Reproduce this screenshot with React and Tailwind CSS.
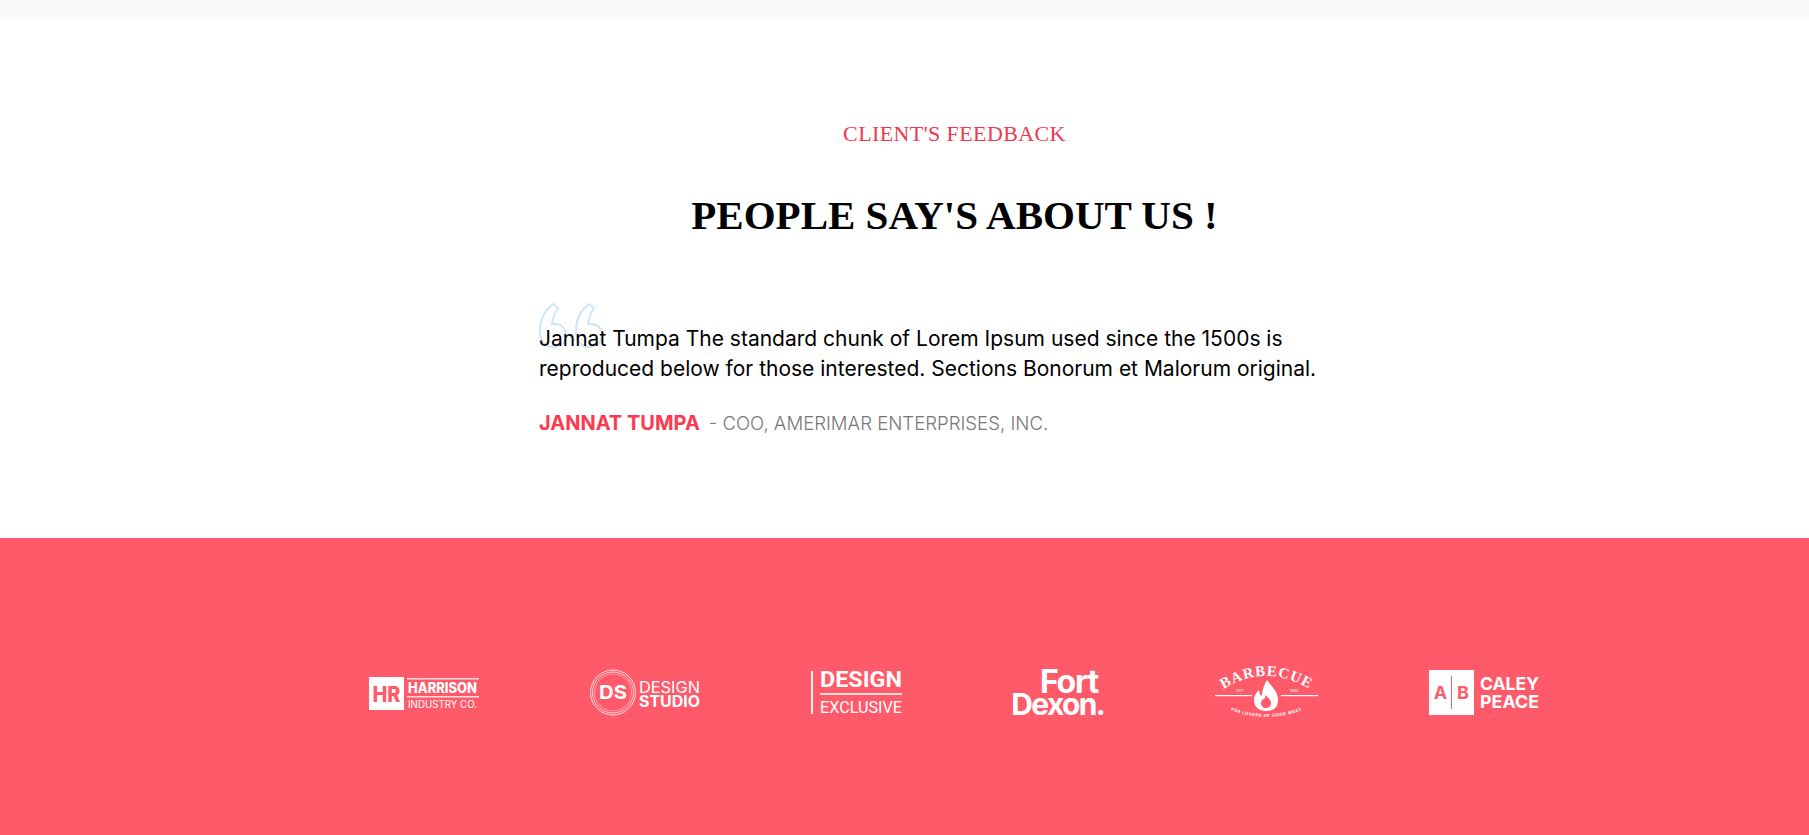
import React from "react";

const serif = "font-['Liberation_Serif',serif]";
const body = "font-['Inter',sans-serif]";
const logoFont = "Inter, sans-serif";

const HarrisonLogo = () => (
  <svg width="110" height="34" viewBox="0 0 110 34" className="block overflow-visible">
    <rect x="0" y="0" width="35" height="33" fill="#fff" />
    <text x="17.5" y="25" textAnchor="middle" fontFamily={logoFont} fontWeight="800" fontSize="22" fill="#ff5a6a" textLength="28" lengthAdjust="spacingAndGlyphs">HR</text>
    <rect x="38" y="1" width="72" height="1.5" fill="#fff" opacity="0.8" />
    <text x="39" y="16" fontFamily={logoFont} fontWeight="800" fontSize="14" fill="#fff" textLength="69" lengthAdjust="spacingAndGlyphs">HARRISON</text>
    <rect x="38" y="19" width="72" height="1.5" fill="#fff" opacity="0.8" />
    <text x="39" y="31" fontFamily={logoFont} fontWeight="400" fontSize="10" fill="#fff" textLength="69" lengthAdjust="spacingAndGlyphs">INDUSTRY CO.</text>
  </svg>
);

const DesignStudioLogo = () => (
  <svg width="110" height="47" viewBox="0 0 110 47" className="block overflow-visible">
    <circle cx="23" cy="23.5" r="22.5" fill="none" stroke="#fff" strokeWidth="1" opacity="0.8" />
    <circle cx="23" cy="23.5" r="20.5" fill="none" stroke="#fff" strokeWidth="1" opacity="0.7" />
    <circle cx="23" cy="23.5" r="18.5" fill="none" stroke="#fff" strokeWidth="0.8" opacity="0.5" />
    <text x="23" y="30" textAnchor="middle" fontFamily={logoFont} fontWeight="700" fontSize="19" fill="#fff" textLength="28" lengthAdjust="spacingAndGlyphs">DS</text>
    <text x="49" y="24" fontFamily={logoFont} fontWeight="400" fontSize="16" fill="#fff" textLength="61" lengthAdjust="spacingAndGlyphs">DESIGN</text>
    <text x="49" y="38" fontFamily={logoFont} fontWeight="700" fontSize="16" fill="#fff" textLength="61" lengthAdjust="spacingAndGlyphs">STUDIO</text>
  </svg>
);

const DesignExclusiveLogo = () => (
  <svg width="91" height="45" viewBox="0 0 91 45" className="block overflow-visible">
    <rect x="0" y="1" width="2" height="43" fill="#fff" opacity="0.9" />
    <text x="9" y="17" fontFamily="Roboto, sans-serif" fontWeight="700" fontSize="22" fill="#fff" textLength="82" lengthAdjust="spacingAndGlyphs">DESIGN</text>
    <rect x="9" y="23" width="82" height="2" fill="#fff" opacity="0.8" />
    <text x="9" y="43" fontFamily="Roboto, sans-serif" fontWeight="400" fontSize="17" fill="#fff" textLength="82" lengthAdjust="spacingAndGlyphs">EXCLUSIVE</text>
  </svg>
);

const FortDexonLogo = () => (
  <div className="flex w-[91px] flex-col items-end font-['Inter',sans-serif] text-[30px] leading-[22px] font-bold tracking-[-1.7px] text-white">
    <span className="pr-[6px] text-[32px] tracking-[-1.2px]">Fort</span>
    <span>Dexon.</span>
  </div>
);

const BarbecueLogo = () => (
  <svg width="103" height="57" viewBox="0 0 103 57" className="block overflow-visible">
    <defs>
      <path id="bbq-top" d="M4 27 Q51 -5 99 27" fill="none" />
      <path id="bbq-bottom" d="M8 42 Q51 62 95 42" fill="none" />
    </defs>
    <text fontFamily="'Liberation Serif', serif" fontWeight="700" fontSize="15" fill="#fff" letterSpacing="1">
      <textPath href="#bbq-top" startOffset="50%" textAnchor="middle">BARBECUE</textPath>
    </text>
    <rect x="0" y="30" width="37" height="1.2" fill="#fff" />
    <rect x="66" y="30" width="37" height="1.2" fill="#fff" />
    <text x="25" y="27" textAnchor="middle" fontFamily={logoFont} fontSize="4" fill="#fff">EST</text>
    <text x="79" y="27" textAnchor="middle" fontFamily={logoFont} fontSize="4" fill="#fff">1985</text>
    <path
      d="M52 15 C56 21 63 26 63 35 C63 43 58 46 51 46 C44 46 39 42 39 35 C39 30 42 27 44 25 C44 28 45 30 47 31 C47 25 49 20 52 15 Z"
      fill="#fff"
    />
    <path d="M51 30 C53 33 56 35 56 38 C56 41 54 43 51 43 C48 43 46 41 46 38 C46 36 47 35 48 34 C49 35 50 33 51 30 Z" fill="#ff5a6a" />
    <text fontFamily={logoFont} fontWeight="700" fontSize="4.2" fill="#fff" letterSpacing="0.6">
      <textPath href="#bbq-bottom" startOffset="50%" textAnchor="middle">FOR LOVERS OF GOOD MEAT</textPath>
    </text>
  </svg>
);

const CaleyPeaceLogo = () => (
  <svg width="110" height="45" viewBox="0 0 110 45" className="block overflow-visible">
    <rect x="0" y="0" width="45" height="45" fill="#fff" />
    <rect x="22" y="6" width="1" height="33" fill="#ff5a6a" />
    <text x="11.5" y="29" textAnchor="middle" fontFamily={logoFont} fontWeight="700" fontSize="18" fill="#ff5a6a">A</text>
    <text x="34" y="29" textAnchor="middle" fontFamily={logoFont} fontWeight="700" fontSize="18" fill="#ff5a6a">B</text>
    <text x="51" y="20" fontFamily={logoFont} fontWeight="700" fontSize="18" fill="#fff" textLength="59" lengthAdjust="spacingAndGlyphs">CALEY</text>
    <text x="51" y="38" fontFamily={logoFont} fontWeight="700" fontSize="18" fill="#fff" textLength="59" lengthAdjust="spacingAndGlyphs">PEACE</text>
  </svg>
);

const QuoteMark = () => (
  <svg width="66" height="46" viewBox="0 0 66 46" className="absolute left-0 top-[-21px]" fill="none" stroke="#cfe5f7" strokeWidth="2">
    <path d="M14 1 C5 8 1 17 1 28 C1 38 6 44 14 44 C22 44 27 39 27 32 C27 25 22 21 16 21 C15 21 14 21 13 21 C14 14 17 8 19 5 Z" />
    <path d="M50 1 C41 8 37 17 37 28 C37 38 42 44 50 44 C58 44 63 39 63 32 C63 25 58 21 52 21 C51 21 50 21 49 21 C50 14 53 8 55 5 Z" />
  </svg>
);

export default function App() {
  return (
    <div className="min-h-[835px] overflow-hidden bg-white">
      <div className="h-[19px] bg-[#fafafa]" />

      {/* Testimonial */}
      <section className="h-[519px] pt-[98px] pl-[100px]">
        <p className={`${serif} text-center text-[22px] leading-[34px] tracking-[0.4px] text-[#f0384f]`}>
          CLIENT'S FEEDBACK
        </p>
        <h2 className={`${serif} mt-[36px] text-center text-[41px] leading-[56px] font-bold text-black`}>
          PEOPLE SAY'S ABOUT US !
        </h2>

        <div className="mt-[81px] ml-[439px] w-[800px]">
          <div className="relative">
            <QuoteMark />
            <p className={`${body} relative text-[21px] leading-[30px] text-black`}>
              Jannat Tumpa The standard chunk of Lorem Ipsum used since the 1500s is
              <br />
              reproduced below for those interested. Sections Bonorum et Malorum original.
            </p>
          </div>
          <p className={`${body} mt-[24px] flex items-baseline text-[20px] leading-[30px]`}>
            <span className="font-bold text-[#fb3a52]">JANNAT TUMPA</span>
            <span className="ml-[9px] text-[18.6px] font-light text-[#777]">- COO, AMERIMAR ENTERPRISES, INC.</span>
          </p>
        </div>
      </section>

      {/* Brand logos */}
      <section className="flex h-[297px] items-start gap-[111px] bg-[#ff5a6a] pl-[369px]">
        <div className="mt-[139px]"><HarrisonLogo /></div>
        <div className="mt-[131px]"><DesignStudioLogo /></div>
        <div className="mt-[132px]"><DesignExclusiveLogo /></div>
        <div className="mt-[133px]"><FortDexonLogo /></div>
        <div className="mt-[127px]"><BarbecueLogo /></div>
        <div className="mt-[132px]"><CaleyPeaceLogo /></div>
      </section>
    </div>
  );
}
